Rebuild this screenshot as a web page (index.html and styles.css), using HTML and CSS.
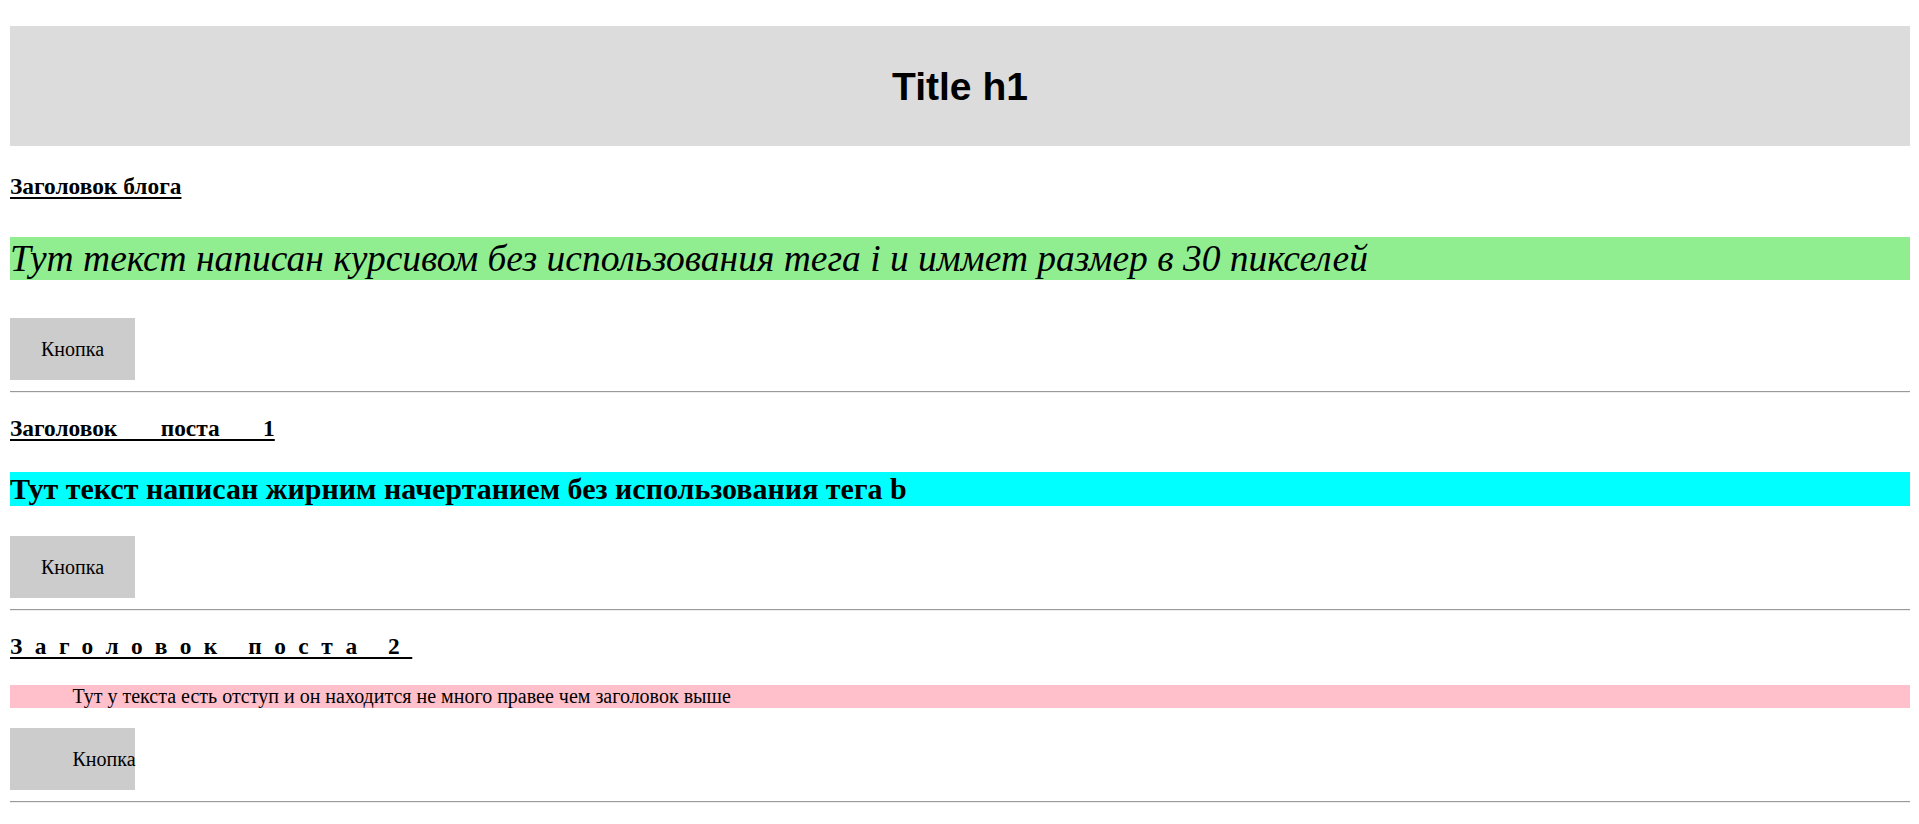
FILE: index.html
```html
<!DOCTYPE html>
<html lang="ru">
<head>
<meta charset="utf-8">
<title>Blog</title>
<link rel="stylesheet" href="styles.css">
</head>
<body>
<header class="site-header">
  <h1 class="site-title">Title h1</h1>
</header>
<main class="blog">
  <section class="post post-intro">
    <h3 class="post-heading">Заголовок блога</h3>
    <p class="text-italic">Тут текст написан курсивом без использования тега i и иммет размер в 30 пикселей</p>
    <button class="btn">Кнопка</button>
  </section>
  <hr class="divider">
  <section class="post post-one">
    <h3 class="post-heading heading-wide-words">Заголовок поста 1</h3>
    <p class="text-bold">Тут текст написан жирним начертанием без использования тега b</p>
    <button class="btn">Кнопка</button>
  </section>
  <hr class="divider">
  <section class="post post-two">
    <h3 class="post-heading heading-spaced">Заголовок поста 2</h3>
    <p class="text-indented">Тут у текста есть отступ и он находится не много правее чем заголовок выше</p>
    <button class="btn btn-indented">Кнопка</button>
  </section>
  <hr class="divider">
</main>
</body>
</html>
```
FILE: styles.css
```css
html, body {
  background: #ffffff;
}

body {
  margin: 0;
  padding: 26px 9px 0 10px;
  font-family: "Liberation Serif", "Times New Roman", serif;
  font-size: 20px;
  color: #000000;
}

.site-header {
  background: #dcdcdc;
  height: 120px;
  display: flex;
  align-items: center;
  justify-content: center;
}

.site-title {
  margin: 0;
  font-family: "Liberation Sans", Arial, sans-serif;
  font-size: 39px;
  font-weight: bold;
  line-height: 46px;
  padding-top: 1px;
}

.blog {
  display: block;
}

.post {
  display: flex;
  flex-direction: column;
  align-items: flex-start;
}

.post-heading {
  margin: 0;
  font-size: 23.4px;
  font-weight: bold;
  line-height: 27px;
  text-decoration: underline;
  text-decoration-thickness: 2px;
  text-underline-offset: 3px;
}

.post-intro .post-heading {
  margin-top: 27px;
}

.post-one .post-heading,
.post-two .post-heading {
  margin-top: 22px;
}

.heading-wide-words {
  word-spacing: 37.5px;
}

.heading-spaced {
  letter-spacing: 12.5px;
}

.text-italic {
  align-self: stretch;
  margin: 37px 0 0;
  background: #90ee90;
  font-style: italic;
  font-size: 37.5px;
  line-height: 43px;
}

.text-bold {
  align-self: stretch;
  margin: 30px 0 0;
  background: #00ffff;
  font-weight: bold;
  font-size: 30px;
  line-height: 34px;
}

.text-indented {
  align-self: stretch;
  margin: 25px 0 0;
  background: #ffc0cb;
  font-size: 20px;
  line-height: 23px;
  text-indent: 62.5px;
}

.btn {
  width: 125px;
  height: 62px;
  margin-top: 38px;
  padding: 0;
  border: none;
  background: #cccccc;
  font-family: "Liberation Serif", "Times New Roman", serif;
  font-size: 20px;
  color: #000000;
  text-align: center;
}

.post-one .btn {
  margin-top: 30px;
}

.btn-indented {
  margin-top: 20px;
  text-indent: 62.5px;
}

.divider {
  margin: 11px 0 0;
  border: 0;
  border-top: 1px solid #9a9a9a;
  border-bottom: 1px solid #eeeeee;
  height: 0;
}
```
